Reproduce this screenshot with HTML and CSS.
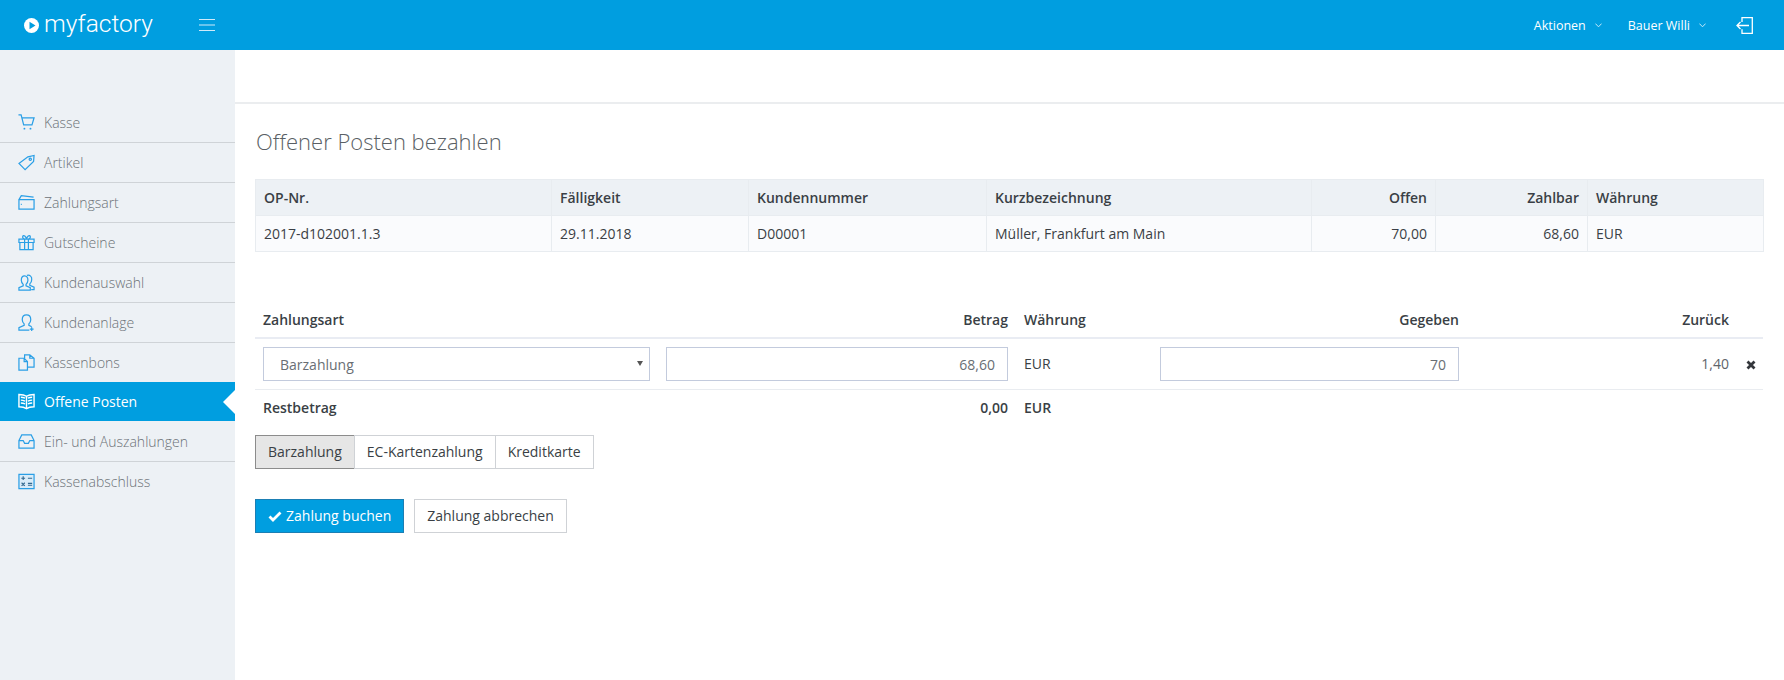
FILE: index.html
```html
<!DOCTYPE html>
<html lang="de">
<head>
<meta charset="utf-8">
<title>Offener Posten bezahlen</title>
<link rel="stylesheet" href="styles.css">
</head>
<body>
<header class="topbar">
  <div class="brand">
    <svg class="brand-icon" viewBox="0 0 15 15"><circle cx="7.500" cy="7.500" r="7.500" fill="#fff"/><path d="M5.500 3.800 11.500 7.500 5.500 11.200z" fill="#009ee0"/></svg>
    <span class="brand-name">myfactory</span>
  </div>
  <svg class="burger" viewBox="0 0 16 12"><path d="M0 .5h16M0 6h16M0 11.500h16" stroke="#cfeafa" stroke-width="1" fill="none"/></svg>
  <nav class="topnav">
    <span class="topnav-item">Aktionen<svg class="chev" viewBox="0 0 7 5"><path d="M.4.6 3.500 3.800 6.600.6" fill="none" stroke="#c4e8f9"/></svg></span>
    <span class="topnav-item">Bauer Willi<svg class="chev" viewBox="0 0 7 5"><path d="M.4.6 3.500 3.800 6.600.6" fill="none" stroke="#c4e8f9"/></svg></span>
    <svg class="logout" viewBox="0 0 17 17"><path d="M6 5V.7h10.300v15.600H6v-4M13 8.500H1M4.500 5 1 8.500 4.500 12" fill="none" stroke="#fff" stroke-width="1.300"/></svg>
  </nav>
</header>
<div class="shell">
  <aside class="sidebar">
    <ul class="menu">
      <li class="menu-item"><svg class="mi" viewBox="0 0 18 18"><path d="M.5 1h2.800l2.700 10.500h8.800L17 4H4"/><circle class="dot" cx="6.800" cy="15.500" r="1"/><circle class="dot" cx="13.200" cy="15.500" r="1"/></svg>Kasse</li>
      <li class="menu-item"><svg class="mi" viewBox="0 0 18 18"><path d="M1 10 10.500 3 17 1.500 16.500 8 7.500 16.500z"/><circle cx="13" cy="5.500" r="1.200"/></svg>Artikel</li>
      <li class="menu-item"><svg class="mi" viewBox="0 0 18 18"><path d="M1 6 3.500 1.800 16.500 3.200M1 6h16V16H1zM3 11h1"/></svg>Zahlungsart</li>
      <li class="menu-item"><svg class="mi" viewBox="0 0 18 18"><path d="M1 5.500h16v3.500H1zM2 9v7.500h14V9M7 5.500v11M11 5.500v11M9 5.500C6 5.500 4.500 4.500 5 2.500 6 .5 8.500 2.500 9 5.500c.5-3 3-5 4-3 .5 2-1 3-4 3z"/></svg>Gutscheine</li>
      <li class="menu-item"><svg class="mi" viewBox="0 0 18 18"><path d="M7 2c-2.500 0-3.500 2-3.500 4.500 0 2 1 3.500 2 4.500v1.500L1 14.500V17h12v-2.500l-4.500-2V11c1-1 2-2.500 2-4.500C10.500 4 9.500 2 7 2zM9.500 1.500c3-1 5.500 1.500 5 4.500 0 2-1 3.500-2 4.500V12l4.500 2v2.500h-3"/></svg>Kundenauswahl</li>
      <li class="menu-item"><svg class="mi" viewBox="0 0 18 18"><path d="M9 1C6 1 4.500 3 4.500 6c0 2 1 3.500 2 4.500V12L1 14.500v2.500h11M9 1c3 0 4.500 2 4.500 5 0 2-1 3.500-2 4.500V12l3 1.500M14.500 14v4M12.500 16h4"/></svg>Kundenanlage</li>
      <li class="menu-item"><svg class="mi" viewBox="0 0 18 18"><path d="M1 4.500h5.500l3.500 3.500V17H1zM6.500 4.500V8H10M7 4.500V1h5.500L17 4.500V14h-7M12.500 1v3.500H17"/></svg>Kassenbons</li>
      <li class="menu-item is-active"><svg class="mi book" viewBox="0 0 18 18"><path d="M9 3.500C7 2 4 1.500 1 1.500v13c3 0 6 .5 8 2 2-1.500 5-2 8-2v-13c-3 0-6 .5-8 2zM9 3.500v13M3 4.500c1.500 0 3 .3 4.500 1M3 7.500c1.500 0 3 .3 4.500 1M3 10.500c1.500 0 3 .3 4.500 1M15 4.500c-1.500 0-3 .3-4.500 1M15 7.500c-1.500 0-3 .3-4.500 1M15 10.500c-1.500 0-3 .3-4.500 1"/></svg>Offene Posten</li>
      <li class="menu-item"><svg class="mi" viewBox="0 0 18 18"><path d="M1 8l3-6h10l3 6v8H1zM1 8h4.500l1.500 3h4l1.500-3H17"/></svg>Ein- und Auszahlungen</li>
      <li class="menu-item"><svg class="mi calc" viewBox="0 0 18 18"><path d="M1 1.500h16v15H1z"/><path class="sym" d="M3.500 5.500h4M5.500 3.500v4M10.500 5.500h4.500M3.800 10.300l3.400 3.400M7.200 10.300l-3.400 3.400M10.500 11h4.500M10.500 13h4.500"/></svg>Kassenabschluss</li>
    </ul>
  </aside>
  <main class="content">
    <div class="subbar"></div>
    <section class="page">
      <h1 class="title">Offener Posten bezahlen</h1>
      <table class="op-table">
        <colgroup><col class="c1"><col class="c2"><col class="c3"><col class="c4"><col class="c5"><col class="c6"><col class="c7"></colgroup>
        <thead>
          <tr><th>OP-Nr.</th><th>Fälligkeit</th><th>Kundennummer</th><th>Kurzbezeichnung</th><th class="num">Offen</th><th class="num">Zahlbar</th><th>Währung</th></tr>
        </thead>
        <tbody>
          <tr><td>2017-d102001.1.3</td><td>29.11.2018</td><td>D00001</td><td>Müller, Frankfurt am Main</td><td class="num">70,00</td><td class="num">68,60</td><td>EUR</td></tr>
        </tbody>
      </table>
      <table class="pay-table">
        <colgroup><col class="p1"><col class="p2"><col class="p3"><col class="p4"><col class="p5"><col class="p6"></colgroup>
        <thead>
          <tr><th>Zahlungsart</th><th class="num">Betrag</th><th>Währung</th><th class="num">Gegeben</th><th class="num">Zurück</th><th></th></tr>
        </thead>
        <tbody>
          <tr class="entry">
            <td><div class="select">Barzahlung<span class="caret"></span></div></td>
            <td><div class="input">68,60</div></td>
            <td>EUR</td>
            <td><div class="input">70</div></td>
            <td class="num light">1,40</td>
            <td class="del"><svg class="x" viewBox="0 0 10 10"><path d="M1.500 1.500l7 7M8.500 1.500l-7 7" stroke="#33363b" stroke-width="2.800" fill="none"/></svg></td>
          </tr>
          <tr class="rest">
            <td>Restbetrag</td><td class="num">0,00</td><td>EUR</td><td></td><td></td><td></td>
          </tr>
        </tbody>
      </table>
      <div class="btn-group">
        <span class="seg is-on">Barzahlung</span><span class="seg">EC-Kartenzahlung</span><span class="seg">Kreditkarte</span>
      </div>
      <div class="actions">
        <span class="btn primary"><svg class="check" viewBox="0 0 14 11"><path d="M1.500 5.500 5 9l7.500-7.500" fill="none" stroke="#fff" stroke-width="2.800"/></svg>Zahlung buchen</span>
        <span class="btn">Zahlung abbrechen</span>
      </div>
    </section>
  </main>
</div>
</body>
</html>
```
FILE: styles.css
```css
* { box-sizing: border-box; }
html, body { margin: 0; height: 100%; }
body {
  font-family: "Open Sans", sans-serif;
  font-size: 14px;
  color: #3a3f45;
  background: #fff;
  overflow: hidden;
  display: flex;
  flex-direction: column;
}
.topbar {
  height: 50px;
  flex: none;
  background: #009ee0;
  display: flex;
  align-items: center;
  color: #fff;
}
.brand {
  display: flex;
  align-items: center;
  margin-left: 24px;
  width: 175px;
}
.brand-icon { width: 15px; height: 15px; margin-right: 5px; }
.brand-name {
  font-family: Roboto, sans-serif;
  font-weight: 300;
  font-size: 24.500px;
  line-height: 50px;
  position: relative;
  top: -1px;
}
.burger { width: 16px; height: 12px; }
.topnav {
  margin-left: auto;
  display: flex;
  align-items: center;
  padding-right: 31px;
  font-size: 12.500px;
}
.topnav-item { display: flex; align-items: center; gap: 9px; margin-right: 26px; }
.topnav-item:nth-child(2) { margin-right: 30px; }
.chev { width: 7px; height: 5px; }
.logout { width: 17px; height: 17px; }
.shell { flex: 1; display: flex; min-height: 0; }
.sidebar {
  width: 235px;
  flex: none;
  background: #edf1f5;
  padding-top: 53px;
}
.menu { list-style: none; margin: 0; padding: 0; }
.menu-item {
  height: 40px;
  display: flex;
  align-items: center;
  padding-left: 18px;
  border-bottom: 1px solid #cfd3d7;
  color: #6c7177;
  font-weight: 300;
  font-size: 14px;
  position: relative;
}
.menu-item:last-child { border-bottom: 0; height: 39px; }
.menu-item:nth-child(7) { border-bottom: 0; height: 39px; }
.menu-item:nth-child(9) { height: 41px; }
.mi {
  width: 17px;
  height: 17px;
  margin-right: 9px;
  fill: none;
  stroke: #2a9fe6;
  stroke-width: 1.300;
  flex: none;
}
.mi .dot { fill: #2a9fe6; stroke: none; }
.calc { fill: #d9ecf9; }
.calc .sym { stroke: #33688f; stroke-width: 1.200; }
.is-active {
  background: #009ee0;
  color: #fff;
  border-bottom: 0;
  font-weight: 400;
  height: 39px;
}
.is-active::after {
  content: "";
  position: absolute;
  right: 0;
  top: 50%;
  margin-top: -12px;
  border: 12px solid transparent;
  border-left: 0;
  border-right-color: #fff;
}
.is-active .mi { stroke: #fff; stroke-width: 1.500; }
.content { flex: 1; min-width: 0; }
.subbar { height: 54px; border-bottom: 2px solid #ebedef; }
.page { padding: 20px 20px 0; }
.title {
  margin: 0 0 21px 1px;
  font-size: 22px;
  font-weight: 300;
  line-height: 34px;
  color: #5a5f65;
}
table { border-collapse: collapse; table-layout: fixed; width: 1508px; }
th { font-weight: 600; text-align: left; }
.num { text-align: right; }
.op-table th, .op-table td {
  border: 1px solid #e8ecf0;
  padding: 0 8px;
  height: 36px;
}
.op-table th { background: #edf1f5; }
.op-table td { background: #fafbfd; }
.c1 { width: 296px; }
.c2 { width: 197px; }
.c3 { width: 238px; }
.c4 { width: 325px; }
.c5 { width: 124px; }
.c6 { width: 152px; }
.c7 { width: 176px; }
.pay-table { margin-top: 50px; }
.p1 { width: 403px; }
.p2 { width: 358px; }
.p3 { width: 136px; }
.p4 { width: 315px; }
.p5 { width: 270px; }
.p6 { width: 26px; }
.pay-table th, .pay-table td { padding: 0 8px; }
.pay-table th { height: 36px; border-bottom: 2px solid #e9ecf3; }
.entry td { height: 51px; border-bottom: 1px solid #e9ecf0; }
.rest td { height: 36px; font-weight: 600; }
.select, .input {
  height: 34px;
  border: 1px solid #c3cbdd;
  line-height: 34px;
  color: #696e74;
  font-size: 14px;
}
.select { padding-left: 16px; position: relative; }
.caret {
  position: absolute;
  right: 6px;
  top: 13px;
  border: 3.500px solid transparent;
  border-top: 5px solid #555;
  border-bottom: 0;
}
.input { text-align: right; padding-right: 12px; }
.light { color: #5f646a; }
.del { text-align: right; }
.del.del { padding: 0 7px 0 0; }
.x { width: 10px; height: 10px; display: inline-block; vertical-align: -1px; }
.btn-group { display: flex; margin-top: 10px; }
.seg {
  height: 34px;
  line-height: 32px;
  padding: 0 12px;
  border: 1px solid #cfd2d6;
  margin-left: -1px;
  background: #fff;
}
.seg:first-child { margin-left: 0; }
.is-on { background: #e6e6e6; border-color: #8c8c8c; }
.actions { display: flex; gap: 10px; margin-top: 30px; }
.btn {
  height: 34px;
  line-height: 32px;
  padding: 0 12px;
  border: 1px solid #cfd2d6;
  display: inline-flex;
  align-items: center;
}
.primary { background: #009ee0; border-color: #1b7fb4; color: #fff; }
.check { width: 14px; height: 11px; margin-right: 4px; }
```
